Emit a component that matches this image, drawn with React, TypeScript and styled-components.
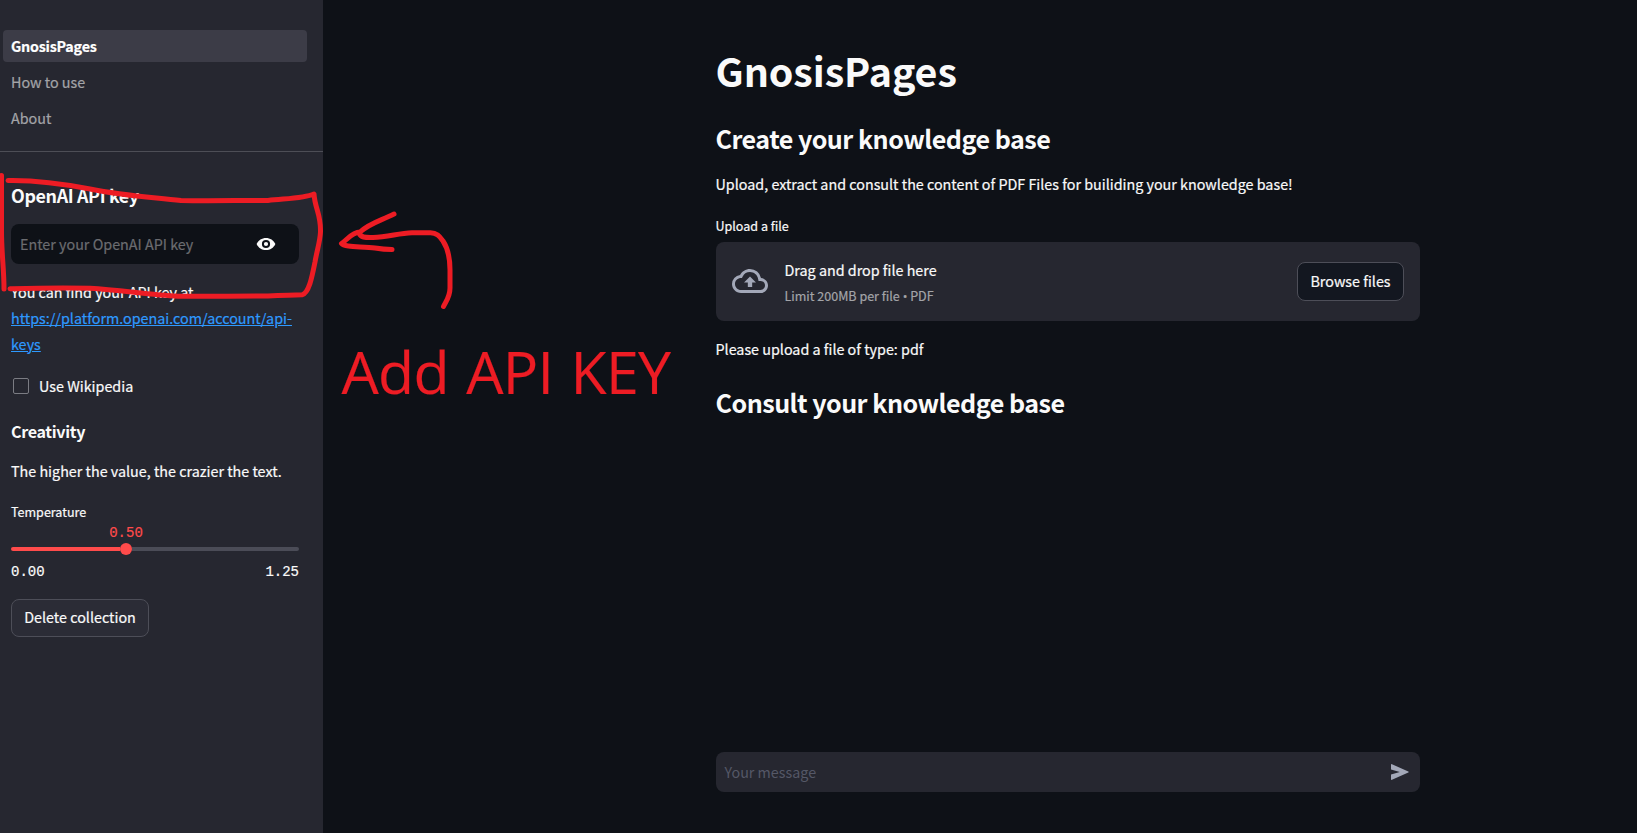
import React from "react";
import styled, { createGlobalStyle, css } from "styled-components";
import { MdOutlineCloudUpload } from "react-icons/md";

const SANS = `"Noto Sans CJK SC", "Noto Sans", sans-serif`;
const MONO = `"Liberation Mono", monospace`;
const RED = "#ed1c24";

const GlobalStyle = createGlobalStyle`
  *, *::before, *::after { box-sizing: border-box; }
  body {
    margin: 0;
    background: #0e1117;
    color: #fafafa;
    font-family: ${SANS};
    font-size: 14.33px;
    line-height: 26px;
    overflow: hidden;
    -webkit-text-stroke: 0.2px;
  }
  h1, h2, h3, p, ul { margin: 0; padding: 0; }
  h1, h2, h3 { -webkit-text-stroke: 0; }
`;

const Page = styled.div`
  position: relative;
  display: flex;
  height: 833px;
  overflow: hidden;
`;

const Sidebar = styled.aside`
  flex: 0 0 323px;
  background: #262730;
`;

const Nav = styled.nav`
  display: flex;
  flex-direction: column;
  gap: 4px;
  padding: 30px 16px 17px 3px;
  border-bottom: 1px solid #4d4e56;
`;

const NavItem = styled.a<{ $active?: boolean }>`
  height: 32px;
  padding: 0 8px;
  line-height: 32px;
  border-radius: 4px;
  color: #a3a4a8;
  ${(p) =>
    p.$active &&
    css`
      background: #3c3c47;
      color: #fff;
      font-weight: 700;
      letter-spacing: -0.22px;
    `}
`;

const SidebarBody = styled.div`
  display: flex;
  flex-direction: column;
  align-items: stretch;
  padding: 29px 24px 0 11px;
`;

const KeyHeading = styled.h2`
  font-size: 17.9px;
  font-weight: 600;
  line-height: 28px;
  letter-spacing: -0.37px;
`;

const KeyField = styled.div`
  display: flex;
  align-items: center;
  justify-content: space-between;
  height: 40px;
  margin-top: 15px;
  padding: 0 23px 0 9px;
  border-radius: 8px;
  background: #0e1117;
  color: #6b6c70;
  svg { fill: #fafafa; }
`;

const KeyHint = styled.p`
  margin-top: 15px;
`;

const Link = styled.a`
  display: block;
  color: #2e9aff;
  text-decoration: underline;
`;

const CheckRow = styled.label`
  display: flex;
  align-items: center;
  gap: 10px;
  height: 26px;
  margin-top: 16px;
  padding-left: 2px;
`;

const CheckBox = styled.span`
  width: 16px;
  height: 16px;
  border: 1px solid #7b7c83;
  border-radius: 2px;
`;

const CreativityHeading = styled.h3`
  margin-top: 19px;
  font-size: 16.1px;
  font-weight: 600;
  line-height: 26px;
  letter-spacing: -0.35px;
`;

const Paragraph = styled.p<{ $top: number }>`
  margin-top: ${(p) => p.$top}px;
`;

const FieldLabel = styled.div<{ $top: number }>`
  margin-top: ${(p) => p.$top}px;
  font-size: 12.54px;
  line-height: 20px;
`;

const Slider = styled.div`
  display: flex;
  flex-direction: column;
  margin-top: 2px;
  font-family: ${MONO};
  font-size: 14px;
  line-height: 18px;
`;

const SliderValue = styled.div`
  width: 230px;
  text-align: center;
  color: #ff4b4b;
`;

const Track = styled.div`
  display: flex;
  align-items: center;
  height: 12px;
  margin-top: 1px;
`;

const TrackFill = styled.div`
  flex: 0 0 109px;
  height: 4px;
  border-radius: 4px 0 0 4px;
  background: #ff4b4b;
`;

const Thumb = styled.div`
  flex: 0 0 12px;
  height: 12px;
  border-radius: 50%;
  background: #ff4b4b;
`;

const TrackRest = styled.div`
  flex: 1;
  height: 4px;
  border-radius: 0 4px 4px 0;
  background: #4b4c57;
`;

const SliderRange = styled.div`
  display: flex;
  justify-content: space-between;
  margin-top: 8px;
`;

const Button = styled.button<{ $width: number; $height: number; $bg: string }>`
  width: ${(p) => p.$width}px;
  height: ${(p) => p.$height}px;
  padding: 0 0 2px;
  border: 1px solid #4d4e58;
  border-radius: 8px;
  background: ${(p) => p.$bg};
  color: #fafafa;
  font: inherit;
  white-space: nowrap;
`;

const DeleteRow = styled.div`
  display: flex;
  margin-top: 18px;
`;

const Main = styled.main`
  display: flex;
  flex-direction: column;
  flex: 1;
  padding: 40px 217px 41px 393px;
  text-indent: -0.5px;
`;

const Title = styled.h1`
  font-size: 39.4px;
  font-weight: 700;
  line-height: 60px;
  letter-spacing: -0.06px;
`;

const Heading = styled.h2<{ $top: number }>`
  margin-top: ${(p) => p.$top}px;
  font-size: 25.1px;
  font-weight: 600;
  line-height: 36px;
  letter-spacing: -0.51px;
`;

const Uploader = styled.section`
  display: flex;
  align-items: center;
  height: 79px;
  margin-top: 6px;
  padding: 0 16px;
  border-radius: 8px;
  background: #262730;
`;

const UploadIcon = styled(MdOutlineCloudUpload)`
  flex: none;
  margin-bottom: 1px;
  color: #a3a8b8;
`;

const UploadText = styled.div`
  flex: 1;
  margin-left: 17px;
`;

const UploadLimit = styled.div`
  margin: 1px 0 -1px;
  color: #a3a4a8;
  font-size: 12.54px;
  line-height: 24px;
`;

const Bullet = styled.span`
  font-family: "Open Sans", sans-serif;
  line-height: 1;
`;

const ChatInput = styled.div`
  display: flex;
  align-items: center;
  justify-content: space-between;
  height: 40px;
  margin-top: auto;
  padding: 0 11px 0 9px;
  border-radius: 8px;
  background: #262730;
  color: #555867;
  -webkit-text-stroke: 0;
  svg { fill: #a3a8b8; }
`;

const Marks = styled.svg`
  position: absolute;
  inset: 0;
  pointer-events: none;
  fill: none;
  stroke: ${RED};
  stroke-width: 5;
  stroke-linecap: round;
  stroke-linejoin: round;
`;

const Callout = styled.div`
  position: absolute;
  left: 341.5px;
  top: 331px;
  color: ${RED};
  font-family: "Open Sans", sans-serif;
  font-size: 59px;
  line-height: 80px;
  letter-spacing: -0.75px;
  word-spacing: 2.8px;
  white-space: nowrap;
`;

const EyeIcon = () => (
  <svg width="20" height="20" viewBox="0 0 20 20">
    <path
      fillRule="evenodd"
      d="M.6 10C2.4 6.100 5.900 3.900 10 3.900S17.600 6.100 19.400 10C17.600 13.900 14.100 16.100 10 16.100S2.400 13.900.6 10ZM10 5.900A4.100 4.100 0 1 0 10 14.100A4.100 4.100 0 1 0 10 5.900ZM10 7.900A2.100 2.100 0 1 1 10 12.100A2.100 2.100 0 1 1 10 7.900Z"
    />
  </svg>
);

const SendIcon = () => (
  <svg width="18" height="16" viewBox="0 0 18 16">
    <path d="M0 .8Q0-.2 1 .2L17.300 7.400Q18.200 8 17.300 8.600L1 15.800Q0 16.200 0 15.200V10.400L8.800 8L0 5.600Z" />
  </svg>
);

export default function App() {
  return (
    <Page>
      <GlobalStyle />
      <Sidebar>
        <Nav>
          <NavItem $active>GnosisPages</NavItem>
          <NavItem>How to use</NavItem>
          <NavItem>About</NavItem>
        </Nav>
        <SidebarBody>
          <KeyHeading>OpenAI API key</KeyHeading>
          <KeyField>
            <span>Enter your OpenAI API key</span>
            <EyeIcon />
          </KeyField>
          <KeyHint>
            You can find your API key at <Link>https://platform.openai.com/account/api-<br />keys</Link>
          </KeyHint>
          <CheckRow>
            <CheckBox />
            Use Wikipedia
          </CheckRow>
          <CreativityHeading>Creativity</CreativityHeading>
          <Paragraph $top={14}>The higher the value, the crazier the text.</Paragraph>
          <FieldLabel $top={18}>Temperature</FieldLabel>
          <Slider>
            <SliderValue>0.50</SliderValue>
            <Track>
              <TrackFill />
              <Thumb />
              <TrackRest />
            </Track>
            <SliderRange>
              <span>0.00</span>
              <span>1.25</span>
            </SliderRange>
          </Slider>
          <DeleteRow>
            <Button $width={138} $height={38} $bg="#2b2c36">Delete collection</Button>
          </DeleteRow>
        </SidebarBody>
      </Sidebar>
      <Main>
        <Title>GnosisPages</Title>
        <Heading $top={20}>Create your knowledge base</Heading>
        <Paragraph $top={15}>
          Upload, extract and consult the content of PDF Files for builiding your knowledge base!
        </Paragraph>
        <FieldLabel $top={19}>Upload a file</FieldLabel>
        <Uploader>
          <UploadIcon size={36} />
          <UploadText>
            <div>Drag and drop file here</div>
            <UploadLimit>
              Limit 200MB per file <Bullet>•</Bullet> PDF
            </UploadLimit>
          </UploadText>
          <Button $width={107} $height={39} $bg="#131720">Browse files</Button>
        </Uploader>
        <Paragraph $top={15}>Please upload a file of type: pdf</Paragraph>
        <Heading $top={22}>Consult your knowledge base</Heading>
        <ChatInput>
          <span>Your message</span>
          <SendIcon />
        </ChatInput>
      </Main>
      <Marks width="1637" height="833" viewBox="0 0 1637 833">
        <path d="M1.5 175.500V230C1.500 255 4 268 4 289" />
        <path d="M8 180.500C35 180 62 183.500 90 189C125 196 150 197 181 200.500C205 201 235 200.500 268 200.500C285 198.500 304 198.500 314 194C315 209 321 214 320.500 232C320 242 317 250 315 262C312 277 309 293 302 294.800C290 295.500 285 295 268 296C235 296 205 296.500 178 296.300C150 295 120 290 90 288.300C60 287.500 40 288 10 288.700" />
        <path d="M394 214C380 221 370 223 360 232C352 232 347 240 341.500 243.500C345 248 363 246 375 248C381 249 386 249.500 392 249.500" />
        <path d="M359 233C361 238 366 237.500 373 237.500C388 237.500 398 233 412 232.700H430C437 232.500 440 237 443 241C449 250 450 259 450 270V288C450 297 446 301 443.500 306.500" />
      </Marks>
      <Callout>Add API KEY</Callout>
    </Page>
  );
}
